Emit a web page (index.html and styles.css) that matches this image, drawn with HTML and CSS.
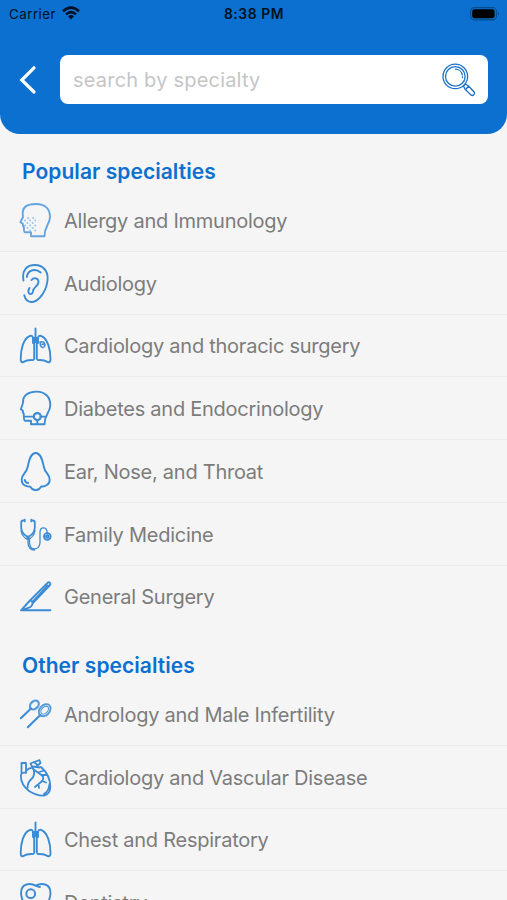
FILE: index.html
```html
<!DOCTYPE html>
<html lang="en">
<head>
<meta charset="utf-8">
<title>Specialties</title>
<link rel="stylesheet" href="styles.css">
</head>
<body>
<header class="header">
  <div class="status">
    <div class="carrier"><span>Carrier</span>
      <svg width="18" height="14" viewBox="0 0 18 14"><g fill="none" stroke="#001022" stroke-width="2.5"><path d="M1 5.2Q9-2 17 5.2"/><path d="M4 8.4Q9 3.8 14 8.4"/></g><path d="M6 10.3Q9 7.9 12 10.3L9 13.4Z" fill="#001022"/></svg>
    </div>
    <div class="clock">8:38 PM</div>
    <svg class="battery" width="30" height="14" viewBox="0 0 30 14"><rect x=".6" y=".6" width="25.8" height="12.3" rx="3.8" fill="none" stroke="#064b8c" stroke-width="1.1"/><rect x="2.2" y="2.3" width="22.4" height="9" rx="2.4" fill="#000"/><path d="M28 4.8Q30 6.8 28 8.8Z" fill="#064b8c"/></svg>
  </div>
  <div class="searchbar">
    <svg class="back" width="20" height="30" viewBox="0 0 20 30"><path d="M16 2.8 3.8 15 16 27" fill="none" stroke="#fff" stroke-width="3.2" stroke-linecap="round"/></svg>
    <div class="field"><span>search by specialty</span>
      <svg width="34" height="34" viewBox="0 0 34 34" fill="none" stroke="#1871c8" stroke-width="1.3" stroke-linecap="round"><circle cx="13.3" cy="13.4" r="12.3"/><circle cx="13.3" cy="13.4" r="9.8"/><path d="M13.5 6.2A7 7 0 0 1 20.3 12M20.5 14v.5M21.5 23l2-2 3 2 5.8 6.2q.7 1.5-.5 2.6t-2.6.4L23 26.2ZM24.3 25.8l2.2-2.5"/></svg>
    </div>
  </div>
</header>
<main>
  <h2>Popular specialties</h2>
  <ul>
    <li><svg class="icon soft" viewBox="0 0 36 40"><path d="M5 17C3 6 10 4 18 4C27 4 32 9 32 17C32 24 26.5 26 26.4 36.2H13V32.2H7Q5.7 32 6 27.5L4.8 25.2L5 23.8L2.4 22.2L5 17"/><path class="dots" d="M10 18h.1m5 0h.1M7 20.5h.1m5 0h.1m5 0h.1M9.5 23h.1m5 0h.1M7 25.5h.1m5 0h.1m5 0h.1M9.5 28h.1m5 0h.1M12 30.5h.1m5 0h.1"/></svg><span>Allergy and Immunology</span></li>
    <li><svg class="icon" viewBox="0 0 36 40"><path d="M5.5 17.5C3.5 7 9 2 17 2C25 2 30 8 29.6 16C29 28 21 38 14.5 39Q8 39.5 6.3 32.2M8.8 14C10 6 18 5.5 22.7 9.5M13.5 17C16 14 20.5 15 20.5 19C20.5 23 15.5 24 15 28C14.5 32 10.5 32.5 10.3 27.5L11.5 25"/></svg><span>Audiology</span></li>
    <li><svg class="icon" viewBox="0 0 36 40"><path d="M17.5 3.5V17M16.2 13V33.5Q16 35.5 13 35Q9 35 4.5 37.3Q2.7 37.5 2.7 34C2.7 24 5.5 14 11 11.3Q15 9.5 15 14V18M18.8 13V33.5Q19 35.5 22 35Q26 35 30.5 37.3Q32.5 37.5 32.5 34C32.5 24 29.5 14 24 11.3Q20 9.5 20 14V18"/><path d="M22 17h3.5q2.5 2.5.8 4.6t-3.8-.8ZM24 19.2h1.3" stroke-width="1.5"/></svg><span>Cardiology and thoracic surgery</span></li>
    <li><svg class="icon" viewBox="0 0 36 40"><path d="M5 15C4.5 7 11 3.6 18.5 3.6C27 3.6 32.3 9 32.3 17C32.3 25 26.5 26 26.5 36.2H13V32.7H7Q5.7 32.5 5.8 26L4.7 24L5 22.8L2.8 21.3L5 15M5.8 28.6H16M22.6 28.6H27M19.3 32V36"/><circle cx="19.3" cy="28.6" r="3.5" stroke-width="2.2"/></svg><span>Diabetes and Endocrinology</span></li>
    <li><svg class="icon" viewBox="0 0 36 40"><path d="M17.7 2C12 2 10.8 11 9.5 16.5C8.5 22 3.7 23 3.7 28.7C3.7 34 8.5 36 12 35.5Q14.3 39.2 17.7 39.2T23.3 35.5C27 36 31.7 33.5 31.7 28.7C31.7 23 27 22 26 16.5C24.7 11 23.5 2 17.7 2ZM6.8 29Q7.5 32 10.2 32"/></svg><span>Ear, Nose, and Throat</span></li>
    <li><svg class="icon" viewBox="0 0 36 40"><path d="M6.4 6.5H5Q3.2 6.5 3.2 9V14Q4 20.5 10 22.8Q16 20.5 16.8 14V9Q16.8 6.5 15 6.5H13.6M6.7 5.6v1.8m6.6-1.8v1.8" stroke-width="1.8"/><path d="M3 16.5Q4 23 10 25.7Q16 23 17 16.5M8.5 24h3V29Q12 34.8 16.6 34.8T22 29V18.5Q22 13.8 25.5 13.8T29.2 19M10 25V29Q10.5 36 16.6 36" stroke-width="1.3"/><circle cx="29.3" cy="22.4" r="3.3"/><circle cx="29.3" cy="22.4" r="1.2"/></svg><span>Family Medicine</span></li>
    <li><svg class="icon" viewBox="0 0 36 40"><path d="M32.4 34.3H3L12 24.5L29.8 6.6Q31 5.8 32 6.8T32 9L14.6 27.3Q14 31 9.5 32.2L3 34.3M12 24.5Q14.3 24.2 14.6 27.3M15 25.5 29.8 9.5"/></svg><span>General Surgery</span></li>
  </ul>
  <h2 class="second">Other specialties</h2>
  <ul>
    <li><svg class="icon" viewBox="0 0 36 40"><g stroke="#559bdb"><ellipse cx="16.4" cy="11" rx="5" ry="3.7" transform="rotate(-45 16.4 11)" stroke-width="2.2"/><ellipse cx="26.7" cy="16.2" rx="6.8" ry="5" transform="rotate(-48 26.7 16.2)"/><ellipse cx="26.7" cy="16.2" rx="4.6" ry="3" transform="rotate(-48 26.7 16.2)" stroke-width="1.2"/></g><path d="M13 14.5 2.8 24.2M22.3 21 9.8 33.2" stroke-width="2"/></svg><span>Andrology and Male Infertility</span></li>
    <li><svg class="icon" viewBox="0 0 36 40"><path d="M3.5 16V6H8V15.9Q3.5 15 3 18C2.5 24 6 30 11 34Q19 39 26 38.5Q32 37.5 32.3 30Q32.3 18 23 10M8 14Q11 10.5 14.5 11L12.5 6.5L16 5L19 7.5M17.5 4.5 21.5 3.2L22.5 6L18.5 9.5M14.5 9.5 22 10.5M15.5 12Q17.5 19 13 22.5Q9.5 25.5 9.5 31M15 12 24 18.5Q27 21.5 23 25L17 30M23.5 18H29M20 15.5 26 13.5M24 24 28 25.5M20.5 27 21 31M31.5 27Q31 34 26 37" stroke-width="1.8"/></svg><span>Cardiology and Vascular Disease</span></li>
    <li><svg class="icon" viewBox="0 0 36 40"><path d="M17.5 3.5V17M16.2 13V33.5Q16 35.5 13 35Q9 35 4.5 37.3Q2.7 37.5 2.7 34C2.7 24 5.5 14 11 11.3Q15 9.5 15 14V18M18.8 13V33.5Q19 35.5 22 35Q26 35 30.5 37.3Q32.5 37.5 32.5 34C32.5 24 29.5 14 24 11.3Q20 9.5 20 14V18"/></svg><span>Chest and Respiratory</span></li>
    <li><svg class="icon" viewBox="0 0 36 40"><path d="M17.7 3.7C23 .8 32.5 1 32.5 11C32.5 20 27 22 26 37C22 40 21 25 17.7 25S13.5 40 9.5 37C9 22 3 20 3 11C3 1 12.5 .8 17.7 3.7Q20 5 22 5"/><circle cx="12.7" cy="11.7" r="4.4" stroke-width="2"/></svg><span>Dentistry</span></li>
  </ul>
</main>
</body>
</html>
```
FILE: styles.css
```css
* { box-sizing: border-box; }
html { height: 900px; overflow: hidden; background: #f5f5f5; }
body { margin: 0; height: 900px; overflow: hidden; background: #f5f5f5; font-family: Inter, "Liberation Sans", sans-serif; }
.header { height: 134px; background: #0b70cf; border-radius: 0 0 20px 20px; }
.status { height: 28px; padding: 0 7px 0 9px; display: grid; grid-template-columns: 1fr auto 1fr; align-items: center; color: #001022; font-size: 13.3px; line-height: 28px; }
.carrier { display: flex; align-items: center; gap: 6px; letter-spacing: .5px; }
.carrier span { margin-right: -.5px; }
.carrier svg { margin-top: -2px; }
.clock { font-weight: 600; font-size: 13.8px; letter-spacing: .6px; margin-right: 1px; }
.battery { justify-self: end; }
.searchbar { margin-top: 27px; padding: 0 19px 0 18px; display: flex; align-items: center; }
.back { margin-right: 22px; }
.field { flex: 1; height: 49px; border-radius: 8px; background: #fff; display: flex; align-items: center; justify-content: space-between; padding: 0 12px 0 13px; font-size: 20px; letter-spacing: .2px; color: #c5c5c7; }
h2 { margin: 0; height: 55px; padding: 23px 0 0 22px; font-size: 21px; line-height: 30px; font-weight: 600; letter-spacing: .05px; color: #0b70cf; }
h2.second { height: 54.75px; padding-top: 22.4px; }
ul { margin: 0; padding: 0; list-style: none; }
li { height: 62.75px; padding-left: 18px; display: flex; align-items: center; border-bottom: 1px solid #e9eced; font-size: 20px; letter-spacing: -.25px; color: #7c7c7c; white-space: nowrap; }
li span { margin: 2px 0 0 10px; }
ul:first-of-type li:last-child { border-bottom-color: transparent; }
.icon { width: 36px; height: 40px; flex: none; fill: none; stroke: #3b8bd5; stroke-width: 1.9; stroke-linecap: round; stroke-linejoin: round; }
.soft { stroke: #65a5df; }
.dots { stroke: #9bc5eb; }
```
